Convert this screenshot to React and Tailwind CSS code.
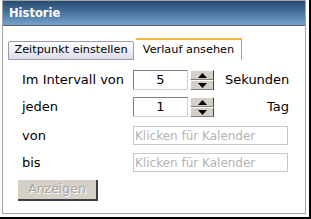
import React from "react";

function Spinner() {
  return (
    <div className="flex flex-col w-[24px] h-[20px] ml-[2px]">
      <div className="flex-1 flex items-center justify-center bg-[#d4d0c8] border-t border-l border-t-white border-l-white border-b border-r border-b-[#808080] border-r-[#404040]">
        <svg width="9" height="5" viewBox="0 0 9 5"><path d="M4.5 0 L9 5 L0 5 Z" fill="#000" /></svg>
      </div>
      <div className="flex-1 flex items-center justify-center bg-[#d4d0c8] border-t border-l border-t-white border-l-white border-b border-r border-b-[#808080] border-r-[#404040]">
        <svg width="9" height="5" viewBox="0 0 9 5"><path d="M0 0 L9 0 L4.5 5 Z" fill="#000" /></svg>
      </div>
    </div>
  );
}

function NumInput({ value }) {
  return (
    <div className="w-[55px] h-[20px] flex items-center justify-center border-t border-l border-t-[#808080] border-l-[#808080] border-b border-r border-b-[#d4d0c8] border-r-[#d4d0c8] text-[13px] text-black bg-white">
      {value}
    </div>
  );
}

function DateInput() {
  return (
    <div className="w-[155px] h-[19px] flex items-center pl-[1px] border border-[#c8c8c8] text-[12px] text-[#b4b4b4] bg-white">
      Klicken für Kalender
    </div>
  );
}

export default function App() {
  return (
    <div
      className="w-[311px] h-[219px] bg-white relative"
      style={{ fontFamily: '"DejaVu Sans", Verdana, sans-serif' }}
    >
      <div className="w-[311px] h-[219px] border-r-2 border-b-2 border-black">
        <div className="ml-[2px] w-[304px] h-[214px] border border-[#a4a4a4] flex flex-col">
          <div className="h-[25px] bg-gradient-to-b from-[#244a70] to-[#74a3cf] border-b border-[#606060] flex items-center pl-[6px] pt-[2px]">
            <span className="text-white font-bold text-[11.5px]">Historie</span>
          </div>
          <div className="flex items-end pl-[5px] pt-[7px] h-[34px]">
            <div className="w-[126px] h-[19px] flex items-center justify-center border border-[#9a9aa8] rounded-t-[2px] bg-gradient-to-b from-white to-[#dcdcec] text-[11.3px] text-black">
              Zeitpunkt einstellen
            </div>
            <div className="ml-[2px] w-[106px] h-[22px] flex items-center justify-center border-t-2 border-[#f6b73c] border-r border-r-[#a0a0a0] bg-white text-[11.3px] text-black">
              Verlauf ansehen
            </div>
          </div>
          <div className="flex flex-col pl-[19px] pt-[10px] text-[13px] text-black">
            <div className="flex items-center h-[20px]">
              <span className="w-[111px]">Im Intervall von</span>
              <NumInput value="5" />
              <Spinner />
              <span className="ml-[11px]">Sekunden</span>
            </div>
            <div className="flex items-center h-[20px] mt-[7px]">
              <span className="w-[111px]">jeden</span>
              <NumInput value="1" />
              <Spinner />
              <span className="w-[75px] text-right">Tag</span>
            </div>
            <div className="flex items-center h-[19px] mt-[9px]">
              <span className="w-[111px]">von</span>
              <DateInput />
            </div>
            <div className="flex items-center h-[19px] mt-[8px]">
              <span className="w-[111px]">bis</span>
              <DateInput />
            </div>
            <div className="mt-[8px] -ml-[4px]">
              <div className="w-[80px] h-[21px] flex items-center justify-center bg-[#d4d0c8] border-b-2 border-r-2 border-b-[#404040] border-r-[#404040] text-[12.5px] text-[#a6a6a6] [text-shadow:1px_1px_0_#ffffff]">
                Anzeigen
              </div>
            </div>
          </div>
        </div>
      </div>
    </div>
  );
}
